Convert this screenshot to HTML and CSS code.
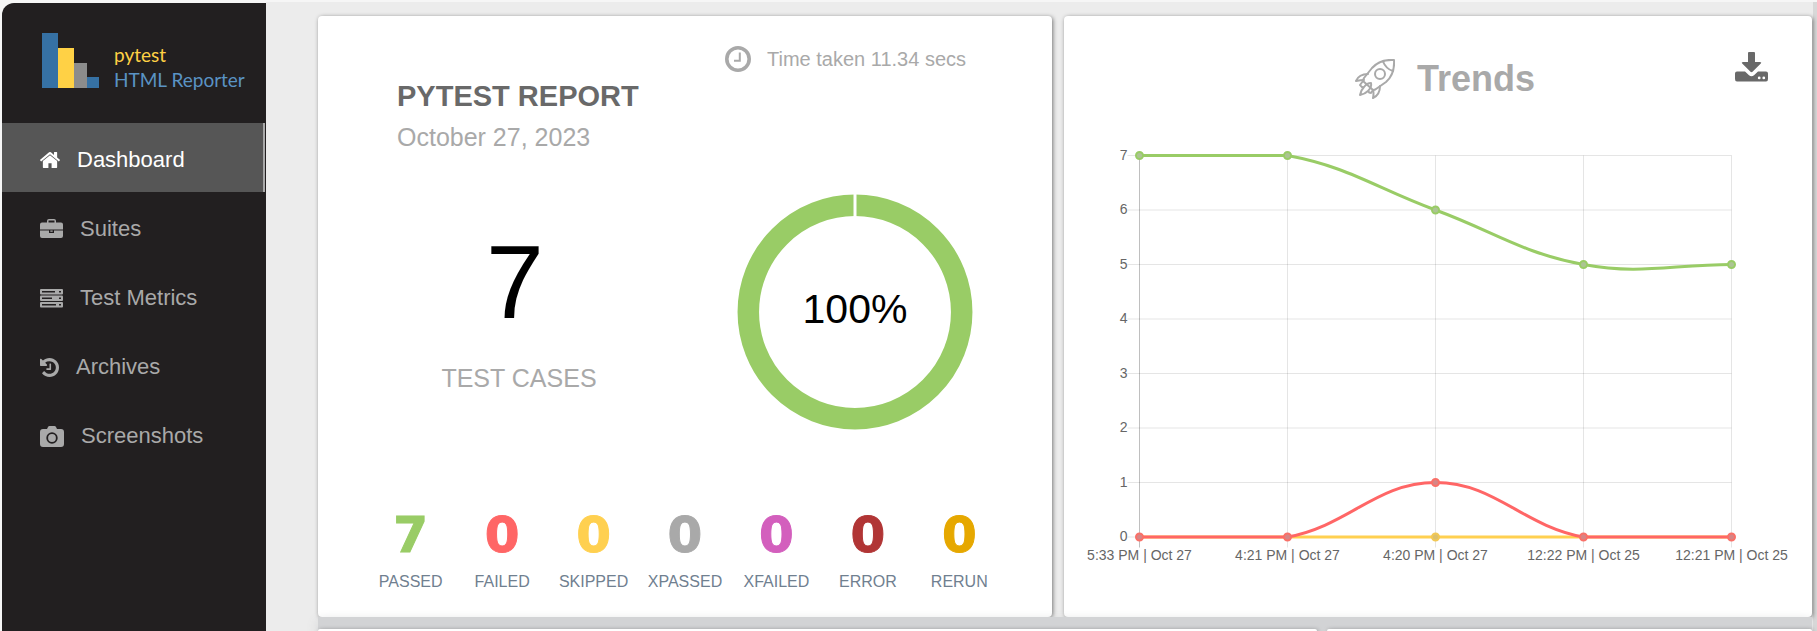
FILE: index.html
```html
<!DOCTYPE html>
<html lang="en">
<head>
<meta charset="utf-8">
<title>Pytest HTML Reporter</title>
<link rel="stylesheet" href="styles.css">
</head>
<body>
<div class="app">
  <aside class="sidebar">
    <div class="brand">
      <svg class="brand-mark" viewBox="0 0 57 55" aria-hidden="true">
        <rect x="0" y="0" width="16" height="55" fill="#3671a4"/>
        <rect x="16" y="15" width="16" height="40" fill="#ffd145"/>
        <rect x="32" y="30" width="13" height="25" fill="#8c8c8c"/>
        <rect x="45" y="44" width="12" height="11" fill="#3671a4"/>
      </svg>
      <div class="brand-text"><span class="brand-top">pytest</span><span class="brand-bottom">HTML Reporter</span></div>
    </div>
    <nav class="nav">
      <a class="nav-link active" href="#dashboard">
        <svg width="20" height="20" viewBox="89 128 1614 1536" fill="currentColor" aria-hidden="true"><path d="M1472 992v480q0 26-19 45t-45 19h-384v-384h-256v384h-384q-26 0-45-19t-19-45v-480q0-1 .5-3t.5-3l575-474 575 474q1 2 1 6zm223-69l-62 74q-8 9-21 11h-3q-13 0-21-7l-692-577-692 577q-12 8-24 7-13-2-21-11l-62-74q-8-10-7-23.5t11-21.5l719-599q32-26 76-26t76 26l244 204v-195q0-14 9-23t23-9h192q14 0 23 9t9 23v408l219 182q10 8 11 21.5t-7 23.5z"/></svg>
        Dashboard</a>
      <a class="nav-link" href="#suites">
        <svg width="23" height="20" viewBox="0 0 23 20" fill="currentColor" aria-hidden="true"><path fill-rule="evenodd" d="M7 3.500V2q0-2 2-2h5q2 0 2 2v1.500h5q2 0 2 2v5H0v-5q0-2 2-2zM8.500 3.500h6V1.500h-6zM0 11.500h9V14h5v-2.500h9V17q0 2-2 2H2q-2 0-2-2zM10.300 11.500h2.400v1.300h-2.400z"/></svg>
        Suites</a>
      <a class="nav-link" href="#metrics">
        <svg width="23" height="20" viewBox="0 0 23 20" aria-hidden="true"><g fill="currentColor"><rect y="1" width="23" height="5.500" rx="1"/><rect y="7.500" width="23" height="5.500" rx="1"/><rect y="14" width="23" height="5.500" rx="1"/></g><g fill="#221f20"><rect x="2" y="3" width="13" height="1.500"/><rect x="2" y="9.500" width="10" height="1.500"/><rect x="2" y="16" width="14" height="1.500"/><rect x="19" y="3" width="2" height="1.500"/><rect x="19" y="9.500" width="2" height="1.500"/><rect x="19" y="16" width="2" height="1.500"/></g></svg>
        Test Metrics</a>
      <a class="nav-link" href="#archives">
        <svg width="19" height="19" viewBox="128 128 1536 1536" fill="currentColor" aria-hidden="true"><path d="M1664 896q0 156-61 298t-164 245-245 164-298 61q-172 0-327-72.500t-264-204.500q-7-10-6.500-22.500t8.500-20.500l137-138q10-9 25-9 16 2 23 12 73 95 179 147t225 52q104 0 198.500-40.500t163.500-109.500 109.500-163.500 40.500-198.500-40.500-198.500-109.500-163.500-163.500-109.500-198.500-40.500q-98 0-188 35.500t-160 101.500l137 138q31 30 14 69-17 40-59 40h-448q-26 0-45-19t-19-45v-448q0-42 40-59 39-17 69 14l130 129q107-101 244.500-156.500t284.500-55.500q156 0 298 61t245 164 164 245 61 298zm-640-288v448q0 14-9 23t-23 9h-320q-14 0-23-9t-9-23v-64q0-14 9-23t23-9h224v-352q0-14 9-23t23-9h64q14 0 23 9t9 23z"/></svg>
        Archives</a>
      <a class="nav-link" href="#screenshots">
        <svg width="24" height="21" viewBox="0 0 24 21" aria-hidden="true"><path fill="currentColor" d="M3 3h4l1-2q.5-1 1.500-1h5q1 0 1.500 1l1 2h4q3 0 3 3v12q0 3-3 3H3q-3 0-3-3V6q0-3 3-3z"/><circle cx="12" cy="12" r="4.800" fill="none" stroke="#221f20" stroke-width="1.800"/></svg>
        Screenshots</a>
    </nav>
  </aside>

  <main class="main">
    <section class="row row-top">
      <article class="card report">
        <p class="time">
          <svg width="26" height="26" viewBox="0 0 26 26" fill="none" stroke="currentColor" aria-hidden="true"><circle cx="13" cy="13" r="11.200" stroke-width="3.600"/><path d="M14.800 6.500v8.300H9" stroke-width="2"/></svg>
          Time taken 11.34 secs</p>
        <h1 class="title">PYTEST REPORT</h1>
        <p class="date">October 27, 2023</p>
        <div class="summary">
          <div class="total"><span class="total-num">7</span><span class="total-label">TEST CASES</span></div>
          <svg class="donut" viewBox="0 0 236 236" role="img" aria-label="100% passed">
            <circle cx="118" cy="118" r="106.700" fill="none" stroke="#99cc66" stroke-width="21.500"/>
            <path d="M118 0v24" stroke="#fff" stroke-width="3"/>
            <text x="118" y="129" text-anchor="middle">100%</text>
          </svg>
        </div>
        <ul class="stats">
          <li><b class="passed">7</b><span>PASSED</span></li>
          <li><b class="failed">0</b><span>FAILED</span></li>
          <li><b class="skipped">0</b><span>SKIPPED</span></li>
          <li><b class="xpassed">0</b><span>XPASSED</span></li>
          <li><b class="xfailed">0</b><span>XFAILED</span></li>
          <li><b class="error">0</b><span>ERROR</span></li>
          <li><b class="rerun">0</b><span>RERUN</span></li>
        </ul>
      </article>

      <article class="card trends">
        <header class="trends-head">
          <h2 class="trends-title">
            <svg width="40" height="40" viewBox="0 0 40 40" fill="none" stroke="currentColor" stroke-width="2" stroke-linejoin="round" stroke-linecap="round" aria-hidden="true"><path d="M39 1Q25 0 17 9L9 19q-1 2-1 3l10 9q2 0 3-1l10-7Q40 15 39 1z"/><path d="M28 2.500Q31 10 38 12"/><circle cx="25" cy="15" r="5"/><path d="M13 15Q4 15 1 22q5-1 8-1M25 27q0 9-7 12 1-5 0-8"/><path d="M8 22l-3 4q2 3 4 2-3 3-4 8 5-1 8-4 1 2 3 2l2-3M9 28q3-4 7-4 1 4-3 8"/></svg>
            Trends</h2>
          <button class="download" type="button" aria-label="Download">
            <svg width="33" height="30" viewBox="0 0 33 30" fill="currentColor" aria-hidden="true"><path d="M13 1q0-1 1-1h5q1 0 1 1v9h5q2 0 .8 1.500l-8.300 8.300q-1 .9-2 0L7.200 11.500Q6 10 8 10h5z"/><path fill-rule="evenodd" d="M2 19.500h8l4 3.700q2.500 2 5 0l4-3.700h8q2 0 2 2V27q0 2.500-2 2.500H2Q0 29.500 0 27v-5.500q0-2 2-2zM24.200 24.500a1.400 1.400 0 1 0 0 2.800 1.400 1.400 0 0 0 0-2.800zm4.600 0a1.400 1.400 0 1 0 0 2.800 1.400 1.400 0 0 0 0-2.800z"/></svg>
          </button>
        </header>
        <svg class="chart" viewBox="0 0 748 480" role="img" aria-label="Test results over time">
          <g transform="translate(75.500 19.500)">
            <g class="grid">
              <path d="M-12 0H592M-12 54.500H592M-12 109H592M-12 163.500H592M-12 218H592M-12 272.500H592M-12 327H592M-12 381.500H592"/>
              <path d="M148 0V392M296 0V392M444 0V392M592 0V392"/>
              <path class="axis" d="M0 0V392"/>
            </g>
            <g class="ylabels">
              <text x="-12" y="4">7</text><text x="-12" y="58">6</text><text x="-12" y="113">5</text><text x="-12" y="167">4</text><text x="-12" y="222">3</text><text x="-12" y="276">2</text><text x="-12" y="331">1</text><text x="-12" y="385">0</text>
            </g>
            <g class="xlabels">
              <text x="0" y="404">5:33 PM | Oct 27</text><text x="148" y="404">4:21 PM | Oct 27</text><text x="296" y="404">4:20 PM | Oct 27</text><text x="444" y="404">12:22 PM | Oct 25</text><text x="592" y="404">12:21 PM | Oct 25</text>
            </g>
            <path class="line line-skip" d="M0 381.500H592"/>
            <circle class="dot dot-skip" cx="296" cy="381.500" r="3.500"/>
            <path class="line line-fail" d="M0 381.500H148C209.100 370.300 236.800 327 296 327S382.900 370.300 444 381.500H592"/>
            <g class="dot dot-fail"><circle cx="0" cy="381.500" r="3.500"/><circle cx="148" cy="381.500" r="3.500"/><circle cx="296" cy="327" r="3.500"/><circle cx="444" cy="381.500" r="3.500"/><circle cx="592" cy="381.500" r="3.500"/></g>
            <path class="line line-pass" d="M0 0H148C209.100 11.200 236.800 32.700 296 54.500C355.200 76.300 382.900 97.800 444 109C501.300 119.600 532.800 109 592 109"/>
            <g class="dot dot-pass"><circle cx="0" cy="0" r="3.500"/><circle cx="148" cy="0" r="3.500"/><circle cx="296" cy="54.500" r="3.500"/><circle cx="444" cy="109" r="3.500"/><circle cx="592" cy="109" r="3.500"/></g>
          </g>
        </svg>
      </article>
    </section>
    <section class="row row-bottom">
      <article class="card"></article>
      <article class="card"></article>
    </section>
  </main>
</div>
</body>
</html>
```
FILE: styles.css
```css
* { box-sizing: border-box; }

body {
  margin: 0;
  background: #f6f6f6;
  font-family: "Liberation Sans", Arial, sans-serif;
}

h1, h2, p, ul { margin: 0; padding: 0; }

.app {
  display: flex;
  min-height: 100vh;
  padding: 2px 0 0 2px;
}

.sidebar {
  flex: 0 0 264px;
  margin-top: 1px;
  background: #221f20;
  border-top-left-radius: 12px;
}

.brand {
  display: flex;
  gap: 15px;
  height: 120px;
  padding: 30px 0 0 40px;
}

.brand-mark { width: 57px; height: 55px; }

.brand-text {
  display: flex;
  flex-direction: column;
  padding-top: 9px;
  font: 400 19px/25px Lato, sans-serif;
  white-space: nowrap;
}

.brand-top { color: #ffd145; }
.brand-bottom { color: #5a93c4; }

.nav { display: flex; flex-direction: column; }

.nav-link {
  display: flex;
  align-items: center;
  gap: 17px;
  height: 69px;
  padding: 5px 0 0 38px;
  color: #a9a9a9;
  font-size: 22px;
  text-decoration: none;
}

.nav-link.active {
  margin-right: 1px;
  border-right: 2px solid #a9a9a9;
  background: #565656;
  color: #fff;
}

.main {
  display: flex;
  flex: 1;
  flex-direction: column;
  min-width: 0;
  padding: 14px 1px 0 52px;
  border-right: 4px solid #d8d8d8;
  background: #ececec;
}

.row { display: grid; }

.row-top {
  grid-template-columns: 734fr 748fr;
  gap: 12px;
}

.row-bottom {
  flex: 1;
  grid-template-columns: 999fr 485fr;
  gap: 10px;
  padding-top: 12px;
  background: #d2d3d5;
  box-shadow: 0 4px 12px #d2d3d5;
}

.card {
  background: #fff;
  border-radius: 4px;
  box-shadow: 1px 1px 4px rgba(0, 0, 0, 0.5);
}

.row-bottom .card {
  border-bottom-left-radius: 0;
  border-bottom-right-radius: 0;
}

.report { padding: 31px 0 25px; }

.time {
  display: flex;
  align-items: center;
  justify-content: flex-end;
  gap: 16px;
  height: 24px;
  padding-right: 86px;
  color: #a9a9a9;
  font-size: 20px;
}

.title {
  margin-top: 7px;
  padding-left: 79px;
  color: #696969;
  font-size: 29px;
  line-height: 36px;
}

.date {
  margin-top: 7px;
  padding-left: 79px;
  color: #a9a9a9;
  font-size: 25px;
  line-height: 32px;
}

.summary {
  display: grid;
  grid-template-columns: 402fr 270fr;
  place-items: center;
  margin-top: 41px;
  padding-right: 62px;
}

.total {
  display: flex;
  flex-direction: column;
  align-items: center;
  gap: 28px;
}

.total-num {
  padding-right: 8px;
  font-size: 104px;
  line-height: 104px;
}

.total-label {
  color: #a9a9a9;
  font-size: 25px;
  line-height: 32px;
}

.donut { width: 236px; height: 236px; font-size: 41px; }

.stats {
  display: grid;
  grid-template-columns: repeat(7, 1fr);
  margin-top: 77px;
  padding: 0 47px;
  list-style: none;
}

.stats li {
  display: flex;
  flex-direction: column;
  align-items: center;
  gap: 9px;
}

.stats b {
  font-family: "DejaVu Sans", sans-serif;
  font-size: 50px;
  font-weight: 700;
  line-height: 56px;
  -webkit-text-stroke: 1px currentColor;
}

.stats span {
  color: #708090;
  font-size: 16px;
  line-height: 20px;
}

.stats .passed { color: #99cc66; }
.stats .failed { color: #ff6666; }
.stats .skipped { color: #ffd050; }
.stats .xpassed { color: #a9a9a9; }
.stats .xfailed { color: #d35fbd; }
.stats .error { color: #b13535; }
.stats .rerun { color: #e6a800; }

.trends-head {
  display: grid;
  grid-template-columns: 1fr auto 1fr;
  padding: 36px 44px 30px 58px;
}

.trends-title {
  display: flex;
  grid-column: 2;
  align-items: center;
  gap: 22px;
  color: #a9a9a9;
  font-size: 36px;
  line-height: 54px;
}

.download {
  justify-self: end;
  align-self: start;
  padding: 0;
  border: 0;
  background: none;
  color: #696969;
  cursor: pointer;
}

.download svg { display: block; }

.chart { display: block; width: 100%; font-size: 14px; }

.grid { fill: none; stroke: rgba(0, 0, 0, 0.1); }
.axis { stroke: rgba(0, 0, 0, 0.25); }

.ylabels, .xlabels { fill: #666; }
.ylabels { text-anchor: end; }
.xlabels { text-anchor: middle; }

.line { fill: none; stroke-width: 3; }
.line-pass { stroke: #99cc66; }
.line-fail { stroke: #ff6666; }
.line-skip { stroke: #ffd050; }

.dot { stroke-width: 2; }
.dot-pass { fill: #acc494; stroke: #99cc66; }
.dot-fail { fill: #d68585; stroke: #f97068; }
.dot-skip { fill: #dcc06c; stroke: #f2c855; }
```
